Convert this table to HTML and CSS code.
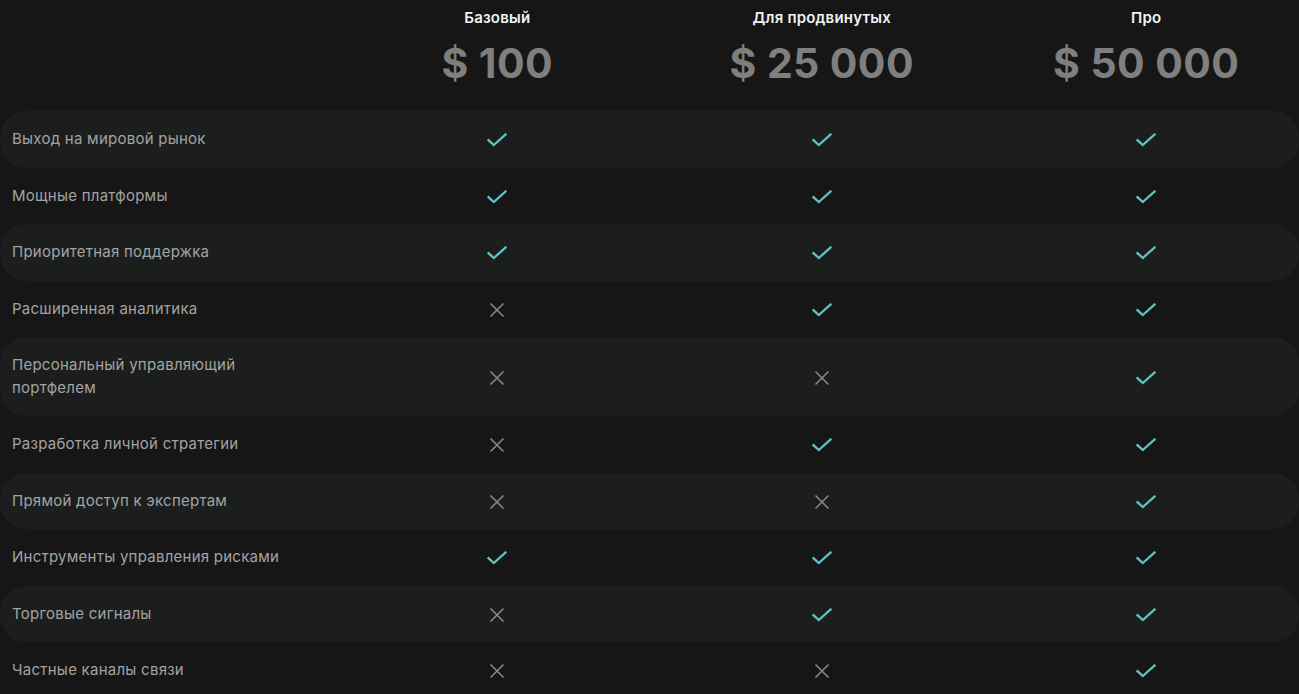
FILE: index.html
```html
<!DOCTYPE html>
<html lang="ru">
<head>
<meta charset="utf-8">
<title>Тарифы</title>
<link rel="stylesheet" href="styles.css">
</head>
<body>
<svg width="0" height="0" class="defs">
  <defs>
    <symbol id="yes" viewBox="0 0 20 14"><path d="M1.5 7.2 L6.8 12 L18.5 1.5" fill="none" stroke="currentColor" stroke-width="2.3" stroke-linecap="square"/></symbol>
    <symbol id="no" viewBox="0 0 16 16"><path d="M1.5 1.5 L14.5 14.5 M14.5 1.5 L1.5 14.5" fill="none" stroke="currentColor" stroke-width="1.5"/></symbol>
  </defs>
</svg>
<main class="table">
  <div class="head">
    <div class="head-empty"></div>
    <div class="plan"><div class="plan-name">Базовый</div><div class="plan-price">$ 100</div></div>
    <div class="plan"><div class="plan-name">Для продвинутых</div><div class="plan-price">$ 25 000</div></div>
    <div class="plan"><div class="plan-name">Про</div><div class="plan-price">$ 50 000</div></div>
  </div>

  <div class="row shade"><div class="label">Выход на мировой рынок</div><div class="cell"><svg class="yes"><use href="#yes"/></svg></div><div class="cell"><svg class="yes"><use href="#yes"/></svg></div><div class="cell"><svg class="yes"><use href="#yes"/></svg></div></div>
  <div class="row"><div class="label">Мощные платформы</div><div class="cell"><svg class="yes"><use href="#yes"/></svg></div><div class="cell"><svg class="yes"><use href="#yes"/></svg></div><div class="cell"><svg class="yes"><use href="#yes"/></svg></div></div>
  <div class="row shade"><div class="label">Приоритетная поддержка</div><div class="cell"><svg class="yes"><use href="#yes"/></svg></div><div class="cell"><svg class="yes"><use href="#yes"/></svg></div><div class="cell"><svg class="yes"><use href="#yes"/></svg></div></div>
  <div class="row"><div class="label">Расширенная аналитика</div><div class="cell"><svg class="no"><use href="#no"/></svg></div><div class="cell"><svg class="yes"><use href="#yes"/></svg></div><div class="cell"><svg class="yes"><use href="#yes"/></svg></div></div>
  <div class="row shade"><div class="label">Персональный управляющий портфелем</div><div class="cell"><svg class="no"><use href="#no"/></svg></div><div class="cell"><svg class="no"><use href="#no"/></svg></div><div class="cell"><svg class="yes"><use href="#yes"/></svg></div></div>
  <div class="row"><div class="label">Разработка личной стратегии</div><div class="cell"><svg class="no"><use href="#no"/></svg></div><div class="cell"><svg class="yes"><use href="#yes"/></svg></div><div class="cell"><svg class="yes"><use href="#yes"/></svg></div></div>
  <div class="row shade"><div class="label">Прямой доступ к экспертам</div><div class="cell"><svg class="no"><use href="#no"/></svg></div><div class="cell"><svg class="no"><use href="#no"/></svg></div><div class="cell"><svg class="yes"><use href="#yes"/></svg></div></div>
  <div class="row"><div class="label">Инструменты управления рисками</div><div class="cell"><svg class="yes"><use href="#yes"/></svg></div><div class="cell"><svg class="yes"><use href="#yes"/></svg></div><div class="cell"><svg class="yes"><use href="#yes"/></svg></div></div>
  <div class="row shade"><div class="label">Торговые сигналы</div><div class="cell"><svg class="no"><use href="#no"/></svg></div><div class="cell"><svg class="yes"><use href="#yes"/></svg></div><div class="cell"><svg class="yes"><use href="#yes"/></svg></div></div>
  <div class="row"><div class="label">Частные каналы связи</div><div class="cell"><svg class="no"><use href="#no"/></svg></div><div class="cell"><svg class="no"><use href="#no"/></svg></div><div class="cell"><svg class="yes"><use href="#yes"/></svg></div></div>
</main>
</body>
</html>
```
FILE: styles.css
```css
* { box-sizing: border-box; }
html, body {
  margin: 0;
  padding: 0;
  background: #161616;
  overflow: hidden;
}
body {
  font-family: Inter, "Noto Sans", sans-serif;
  color: #a3a3a3;
}
.defs { position: absolute; width: 0; height: 0; }
.table {
  width: 1299px;
}
.head, .row {
  display: grid;
  grid-template-columns: 335px 324.5px 324.5px 324.5px;
}
.head {
  height: 111px;
  padding-top: 8px;
}
.plan {
  display: flex;
  flex-direction: column;
  align-items: center;
}
.plan-name {
  font-size: 15px;
  line-height: 20px;
  font-weight: 600;
  color: #f2f2f2;
  letter-spacing: 0.2px;
}
.plan-price {
  margin-top: 12px;
  font-size: 41px;
  line-height: 46px;
  font-weight: 700;
  color: #7f7f7f;
  letter-spacing: 0.4px;
}
.row {
  border-radius: 26px;
}
.row.shade {
  background: #1c1e1e;
}
.label {
  padding: 17px 0 17px 12px;
  font-size: 15px;
  line-height: 22.5px;
  letter-spacing: 0.25px;
  max-width: 285px;
}
.cell {
  display: flex;
  align-items: center;
  justify-content: center;
  padding-top: 2px;
}
.yes {
  width: 20px;
  height: 14px;
  color: #5fc2c4;
}
.no {
  width: 16px;
  height: 16px;
  color: #8a8a8a;
}
```
